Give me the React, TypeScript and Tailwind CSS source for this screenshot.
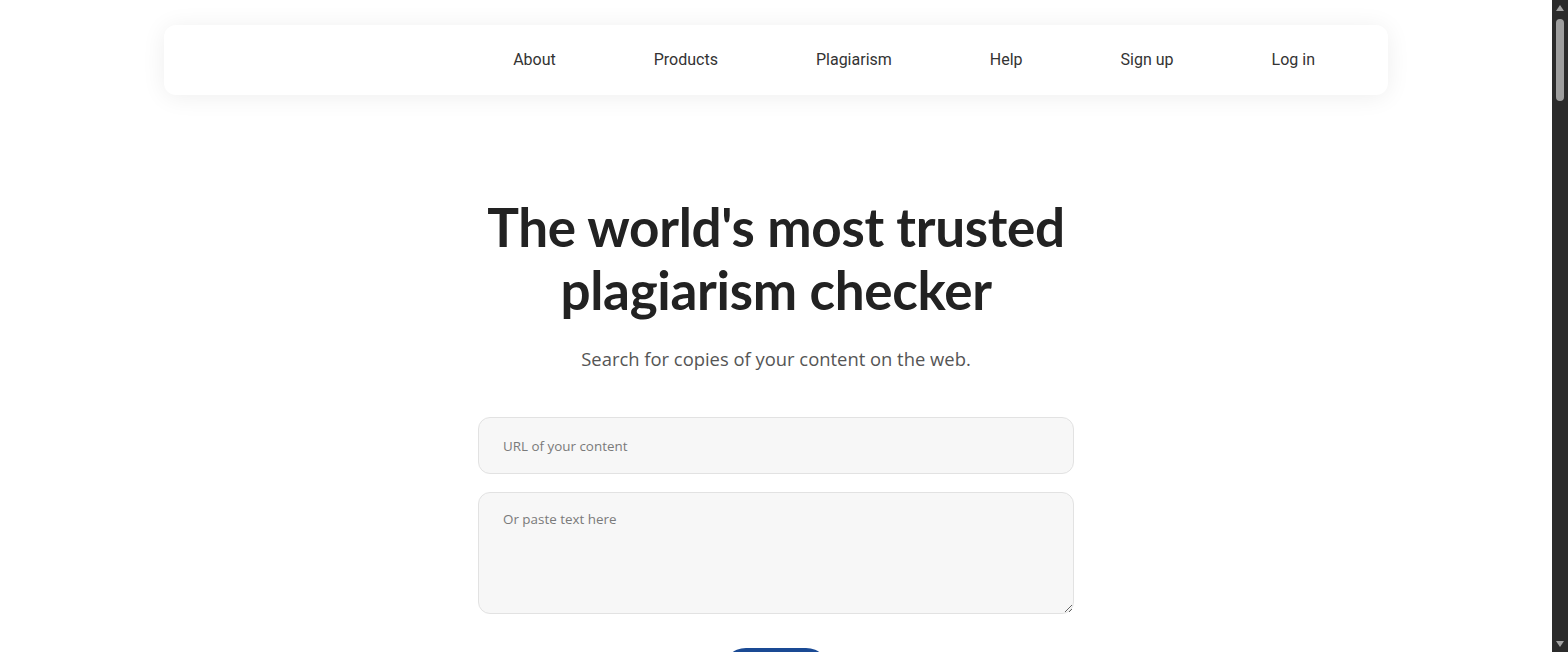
import React from "react";

const navLinks = ["About", "Products", "Plagiarism", "Help", "Sign up", "Log in"];

function Scrollbar() {
  return (
    <div className="flex h-full w-[16px] shrink-0 flex-col items-center bg-[#2b2b2b]">
      <svg width="16" height="16" viewBox="0 0 16 16" className="shrink-0">
        <path d="M4 11 L8 5 L12 11 Z" fill="#a3a3a3" />
      </svg>
      <div className="mt-[3px] h-[82px] w-[8px] rounded-full bg-[#9f9f9f]" />
      <div className="flex-1" />
      <svg width="16" height="16" viewBox="0 0 16 16" className="shrink-0">
        <path d="M4 5 L12 5 L8 11 Z" fill="#a3a3a3" />
      </svg>
    </div>
  );
}

export default function App() {
  return (
    <div className="flex h-screen overflow-hidden bg-white">
      <div className="min-w-0 flex-1 overflow-hidden">
        <header className="px-[164px] pt-[25px]">
          <nav className="flex h-[70px] items-center justify-end rounded-[12px] bg-white pr-[73px] shadow-[0_2px_24px_rgba(0,0,0,0.07)]">
            <ul className="flex items-center gap-[98px] font-['Roboto',sans-serif] text-[16px] text-[#333]">
              {navLinks.map((l) => (
                <li key={l}>
                  <a href="#" className="leading-none">
                    {l}
                  </a>
                </li>
              ))}
            </ul>
          </nav>
        </header>

        <main className="flex flex-col items-center pt-[100px]">
          <h1 className="text-center font-['Lato',sans-serif] text-[53px] font-bold leading-[63px] tracking-[-0.3px] text-[#222]">
            The world's most trusted
            <br />
            plagiarism checker
          </h1>
          <p className="mt-[24px] font-['Open_Sans',sans-serif] text-[18.4px] leading-[28px] text-[#555]">
            Search for copies of your content on the web.
          </p>

          <form className="mt-[44px] flex w-[596px] flex-col items-center gap-[18px]">
            <input
              type="text"
              placeholder="URL of your content"
              className="h-[57px] w-full rounded-[12px] border border-[#e2e2e2] bg-[#f7f7f7] px-[24px] font-['Open_Sans',sans-serif] text-[13.4px] text-[#333] outline-none placeholder:text-[#7a7a7a]"
            />
            <textarea
              placeholder="Or paste text here"
              className="h-[122px] w-full rounded-[12px] border border-[#e2e2e2] bg-[#f7f7f7] px-[24px] pt-[16px] font-['Open_Sans',sans-serif] text-[13.4px] text-[#333] outline-none placeholder:text-[#7a7a7a]"
            />
            <button
              type="button"
              className="mt-[16px] h-[48px] w-[108px] rounded-full bg-[#1a4a94] font-['Open_Sans',sans-serif] text-[16px] font-semibold text-white"
            >
              Go
            </button>
          </form>
        </main>
      </div>
      <Scrollbar />
    </div>
  );
}
